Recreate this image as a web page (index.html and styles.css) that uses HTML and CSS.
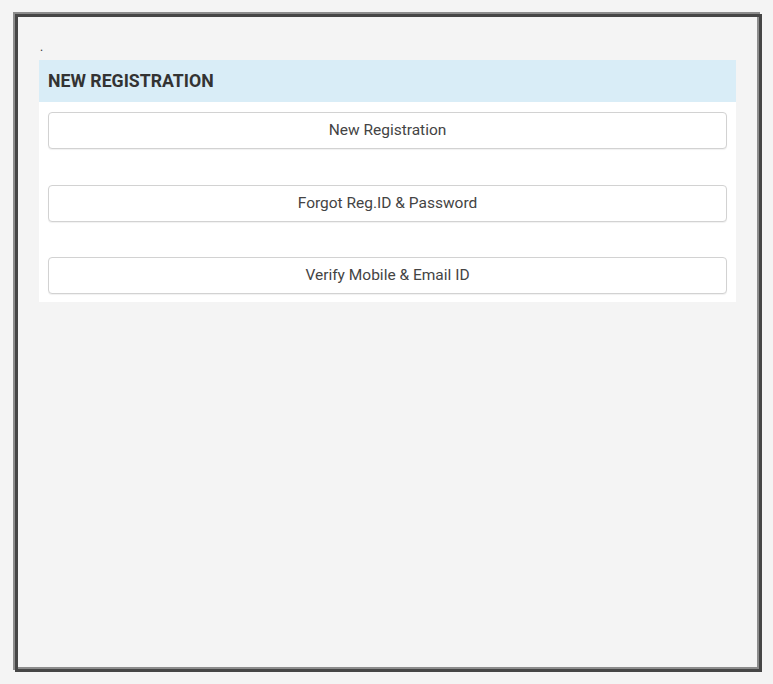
FILE: index.html
```html
<!DOCTYPE html>
<html>
<head>
<meta charset="utf-8">
<link rel="stylesheet" href="styles.css">
</head>
<body>
<div class="frame">
  <div class="dot">.</div>
  <div class="panel">
    <div class="panel-heading">NEW REGISTRATION</div>
    <div class="panel-body">
      <button class="btn">New Registration</button>
      <button class="btn">Forgot Reg.ID &amp; Password</button>
      <button class="btn">Verify Mobile &amp; Email ID</button>
    </div>
  </div>
</div>
</body>
</html>
```
FILE: styles.css
```css
html, body {
  margin: 0;
  padding: 0;
  background: #f4f4f4;
  font-family: Roboto, "Liberation Sans", sans-serif;
  color: #333;
}
.frame {
  box-sizing: border-box;
  margin: 14px 0 0 15px;
  width: 747px;
  height: 658px;
  border: 3px solid #464646;
  box-shadow: -2px -2px 0 #8c8c8c, inset -2px -2px 0 #8c8c8c;
  background: #f4f4f4;
  padding: 22px 23px 0 21px;
}
.dot {
  font-size: 12px;
  line-height: 16px;
  height: 16px;
  margin-bottom: 5px;
  color: #333;
  padding-left: 1px;
}
.panel {
  background: #fff;
  width: 697px;
}
.panel-heading {
  background: #d9edf7;
  height: 42px;
  line-height: 42px;
  padding: 0 9px;
  font-size: 17.7px;
  font-weight: bold;
  color: #333;
}
.panel-body {
  display: flex;
  flex-direction: column;
  gap: 35.5px;
  padding: 10px 9px 8px;
}
.btn {
  display: block;
  width: 100%;
  height: 37px;
  box-sizing: border-box;
  background: #fff;
  border: 1px solid #d2d2d2;
  border-radius: 4px;
  box-shadow: 0 1px 1px rgba(0,0,0,0.06);
  font-family: Roboto, "Liberation Sans", sans-serif;
  font-size: 15.5px;
  color: #444;
  padding: 0 0 1px;
  text-align: center;
}
```
